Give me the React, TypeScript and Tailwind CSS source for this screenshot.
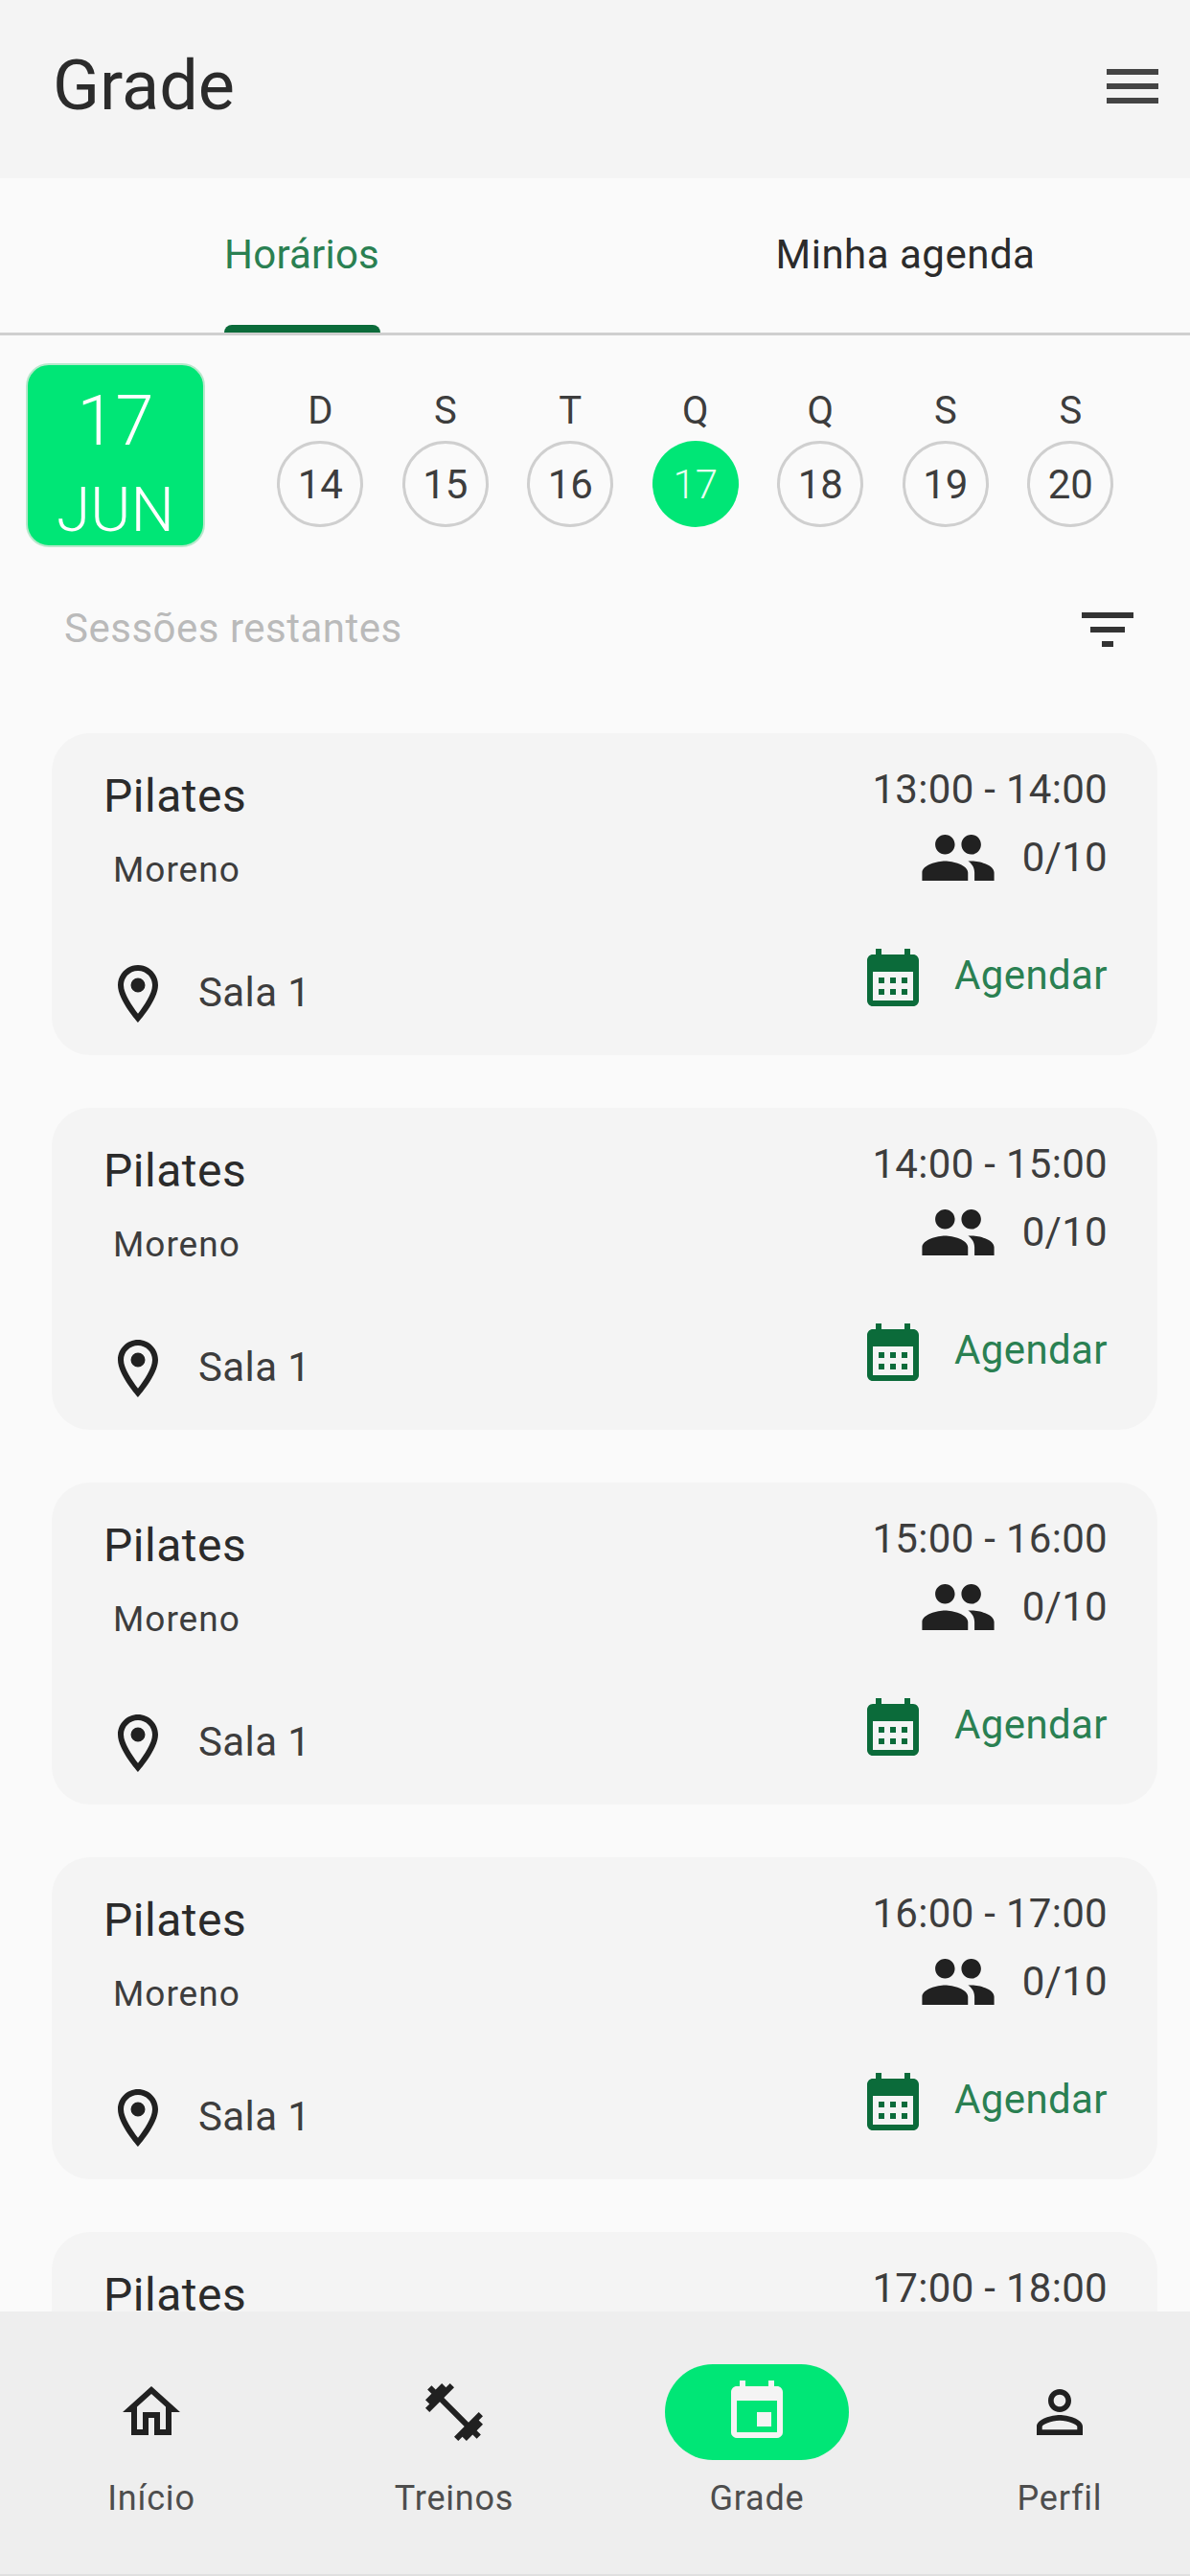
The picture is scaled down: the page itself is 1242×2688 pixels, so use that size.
const font = { fontFamily: 'Roboto, sans-serif' }

const days = [
  { l: 'D', n: 14 },
  { l: 'S', n: 15 },
  { l: 'T', n: 16 },
  { l: 'Q', n: 17, active: true },
  { l: 'Q', n: 18 },
  { l: 'S', n: 19 },
  { l: 'S', n: 20 },
]

const sessions = ['13:00 - 14:00', '14:00 - 15:00', '15:00 - 16:00', '16:00 - 17:00']

function Icon({ d, className }: { d: string; className: string }) {
  return (
    <svg viewBox="0 0 24 24" className={className} fill="currentColor">
      <path d={d} />
    </svg>
  )
}

const menuPath = 'M3 18h18v-2H3v2zm0-5h18v-2H3v2zm0-7v2h18V6H3z'
const filterPath = 'M10 18h4v-2h-4v2zM3 6v2h18V6H3zm3 7h12v-2H6v2z'
const peoplePath =
  'M16 11c1.66 0 2.99-1.34 2.99-3S17.66 5 16 5c-1.66 0-3 1.34-3 3s1.34 3 3 3zm-8 0c1.66 0 2.99-1.34 2.99-3S9.66 5 8 5C6.34 5 5 6.34 5 8s1.34 3 3 3zm0 2c-2.33 0-7 1.17-7 3.5V19h14v-2.5c0-2.33-4.67-3.5-7-3.5zm8 0c-.29 0-.62.02-.97.05 1.16.84 1.97 1.97 1.97 3.45V19h6v-2.5c0-2.33-4.67-3.5-7-3.5z'
const pinPath =
  'M12 2C8.13 2 5 5.13 5 9c0 5.25 7 13 7 13s7-7.75 7-13c0-3.87-3.13-7-7-7zM7 9c0-2.76 2.24-5 5-5s5 2.24 5 5c0 2.88-2.88 7.19-5 9.88C9.92 16.21 7 11.85 7 9zm5-2.5a2.5 2.5 0 1 0 0 5 2.5 2.5 0 0 0 0-5z'
const calendarPath =
  'M19 4h-1V2h-2v2H8V2H6v2H5c-1.1 0-2 .9-2 2v14c0 1.1.9 2 2 2h14c1.1 0 2-.9 2-2V6c0-1.1-.9-2-2-2zm0 16H5V10h14v10zM9 14H7v-2h2v2zm4 0h-2v-2h2v2zm4 0h-2v-2h2v2zm-8 4H7v-2h2v2zm4 0h-2v-2h2v2zm4 0h-2v-2h2v2z'
const homePath = 'M12 5.69l5 4.5V18h-2v-6H9v6H7v-7.81l5-4.5M12 3L2 12h3v8h6v-6h2v6h6v-8h3L12 3z'
const dumbbellPath =
  'M20.57 14.86L22 13.43 20.57 12 17 15.57 8.43 7 12 3.43 10.57 2 9.14 3.43 7.71 2 5.57 4.14 4.14 2.71 2.71 4.14l1.43 1.43L2 7.71l1.43 1.43L2 10.57 3.43 12 7 8.43 15.57 17 12 20.57 13.43 22l1.43-1.43L16.29 22l2.14-2.14 1.43 1.43 1.43-1.43-1.43-1.43L22 16.29z'
const eventPath =
  'M17 12h-5v5h5v-5zM16 1v2H8V1H6v2H5c-1.11 0-1.99.9-1.99 2L3 19c0 1.1.89 2 2 2h14c1.1 0 2-.9 2-2V5c0-1.1-.9-2-2-2h-1V1h-2zm3 18H5V8h14v11z'
const personPath =
  'M12 5.9c1.16 0 2.1.94 2.1 2.1s-.94 2.1-2.1 2.1S9.9 9.16 9.9 8s.94-2.1 2.1-2.1m0 9c2.97 0 6.1 1.46 6.1 2.1v1.1H5.9V17c0-.64 3.13-2.1 6.1-2.1M12 4C9.79 4 8 5.79 8 8s1.79 4 4 4 4-1.79 4-4-1.79-4-4-4zm0 9c-2.67 0-8 1.34-8 4v3h16v-3c0-2.66-5.33-4-8-4z'

function SessionCard({ time }: { time: string }) {
  return (
    <div className="ml-[54px] mr-[34px] mb-[55px] h-[336px] shrink-0 rounded-[40px] bg-[#f4f4f4] pl-[54px] pr-[52px] flex justify-between">
      <div className="flex flex-col">
        <div className="mt-[37px] h-[58px] leading-[58px] text-[48px] text-[#2b2b2b] tracking-[0.5px]">Pilates</div>
        <div className="mt-[28px] ml-[10px] h-[40px] leading-[40px] text-[37px] text-[#3d3d3d] tracking-[1px]">Moreno</div>
        <div className="mt-[73px] flex items-center h-[72px]">
          <Icon d={pinPath} className="w-[72px] h-[72px] text-[#212121]" />
          <span className="ml-[27px] -mt-[2px] text-[42px] leading-[50px] text-[#3d3d3d] tracking-[0.4px]">Sala 1</span>
        </div>
      </div>
      <div className="flex flex-col items-end">
        <div className="mt-[34px] h-[50px] leading-[50px] text-[42px] text-[#3d3d3d] tracking-[0.3px]">{time}</div>
        <div className="mt-[11px] flex items-center h-[70px]">
          <Icon d={peoplePath} className="w-[82px] h-[82px] text-[#212121]" />
          <span className="ml-[26px] text-[42px] leading-[50px] text-[#3d3d3d] tracking-[0.3px]">0/10</span>
        </div>
        <div className="mt-[54px] flex items-center h-[72px]">
          <Icon d={calendarPath} className="w-[72px] h-[72px] text-[#0b6b3a]" />
          <span className="ml-[28px] text-[42px] leading-[50px] text-[#2a8052] tracking-[0.4px] -mt-[4px]">Agendar</span>
        </div>
      </div>
    </div>
  )
}

function NavItem({ d, label, active }: { d: string; label: string; active?: boolean }) {
  return (
    <div className="flex flex-col items-center">
      <div className={`w-[192px] h-[100px] rounded-[50px] flex items-center justify-center ${active ? 'bg-[#00e676] text-[#f4f4f4]' : 'text-[#212121]'}`}>
        <Icon d={d} className="w-[72px] h-[72px]" />
      </div>
      <div className="mt-[18px] text-[36px] leading-[44px] text-[#4d4d4d] tracking-[0.8px]">{label}</div>
    </div>
  )
}

export default function App() {
  return (
    <div style={font} className="w-[1242px] h-[2688px] bg-[#fafafa] flex flex-col overflow-hidden">
      <header className="h-[186px] shrink-0 bg-[#f4f4f4] flex items-center justify-between pl-[55px] pr-[24px]">
        <h1 className="text-[72px] font-normal text-[#2b2b2b] -mt-[6px]">Grade</h1>
        <Icon d={menuPath} className="w-[72px] h-[72px] text-[#444] -mt-[6px]" />
      </header>

      <div className="h-[164px] shrink-0 border-b-[3px] border-[#cfcfcf] grid grid-cols-[630px_630px] text-[42px] overflow-hidden">
        <div className="relative flex items-center justify-center text-[#2a8052] tracking-[0.2px] pb-[2px]">
          <span>Horários</span>
          <div className="absolute left-[234px] bottom-0 w-[163px] h-[8px] rounded-t-[8px] bg-[#0b6b3a]" />
        </div>
        <div className="flex items-center justify-center text-[#2b2b2b] tracking-[0.5px] pb-[2px]">Minha agenda</div>
      </div>

      <div className="flex pl-[27px] pt-[29px] shrink-0">
        <div className="w-[187px] h-[192px] rounded-[24px] bg-[#00e676] border-[2px] border-[#b8e8cc] flex flex-col items-center text-white font-light">
          <div className="mt-[17px] text-[72px] leading-[84px]">17</div>
          <div className="mt-[15px] text-[64px] leading-[72px]">JUN</div>
        </div>
        <div className="ml-[55px] mt-[26px] grid grid-cols-[repeat(7,130.5px)]">
          {days.map((day) => (
            <div key={day.n} className="flex flex-col items-center">
              <div className="h-[48px] leading-[48px] text-[40px] text-[#3d3d3d]">{day.l}</div>
              <div
                className={`mt-[7px] w-[90px] h-[90px] rounded-full flex items-center justify-center text-[42px] ${
                  day.active ? 'bg-[#00e676] text-[#eafff2] font-light' : 'border-[3px] border-[#cfcfcf] text-[#3d3d3d]'
                }`}
              >
                {day.n}
              </div>
            </div>
          ))}
        </div>
      </div>

      <div className="flex items-center justify-between pl-[67px] pr-[50px] mt-[49px] h-[72px] shrink-0">
        <span className="-mt-[2px] text-[42px] text-[#bababa] tracking-[0.5px]">Sessões restantes</span>
        <Icon d={filterPath} className="mt-[2px] w-[72px] h-[72px] text-[#333]" />
      </div>

      <div className="flex-1 min-h-0 overflow-hidden flex flex-col pt-[73px]">
        {sessions.map((time) => (
          <SessionCard key={time} time={time} />
        ))}
        <SessionCard time="17:00 - 18:00" />
      </div>

      <nav className="h-[276px] shrink-0 bg-[#eeeeee] border-b-[2px] border-[#e0e0e0] grid grid-cols-[repeat(4,316px)] justify-start pt-[55px] overflow-hidden">
        <NavItem d={homePath} label="Início" />
        <NavItem d={dumbbellPath} label="Treinos" />
        <NavItem d={eventPath} label="Grade" active />
        <NavItem d={personPath} label="Perfil" />
      </nav>
    </div>
  )
}
